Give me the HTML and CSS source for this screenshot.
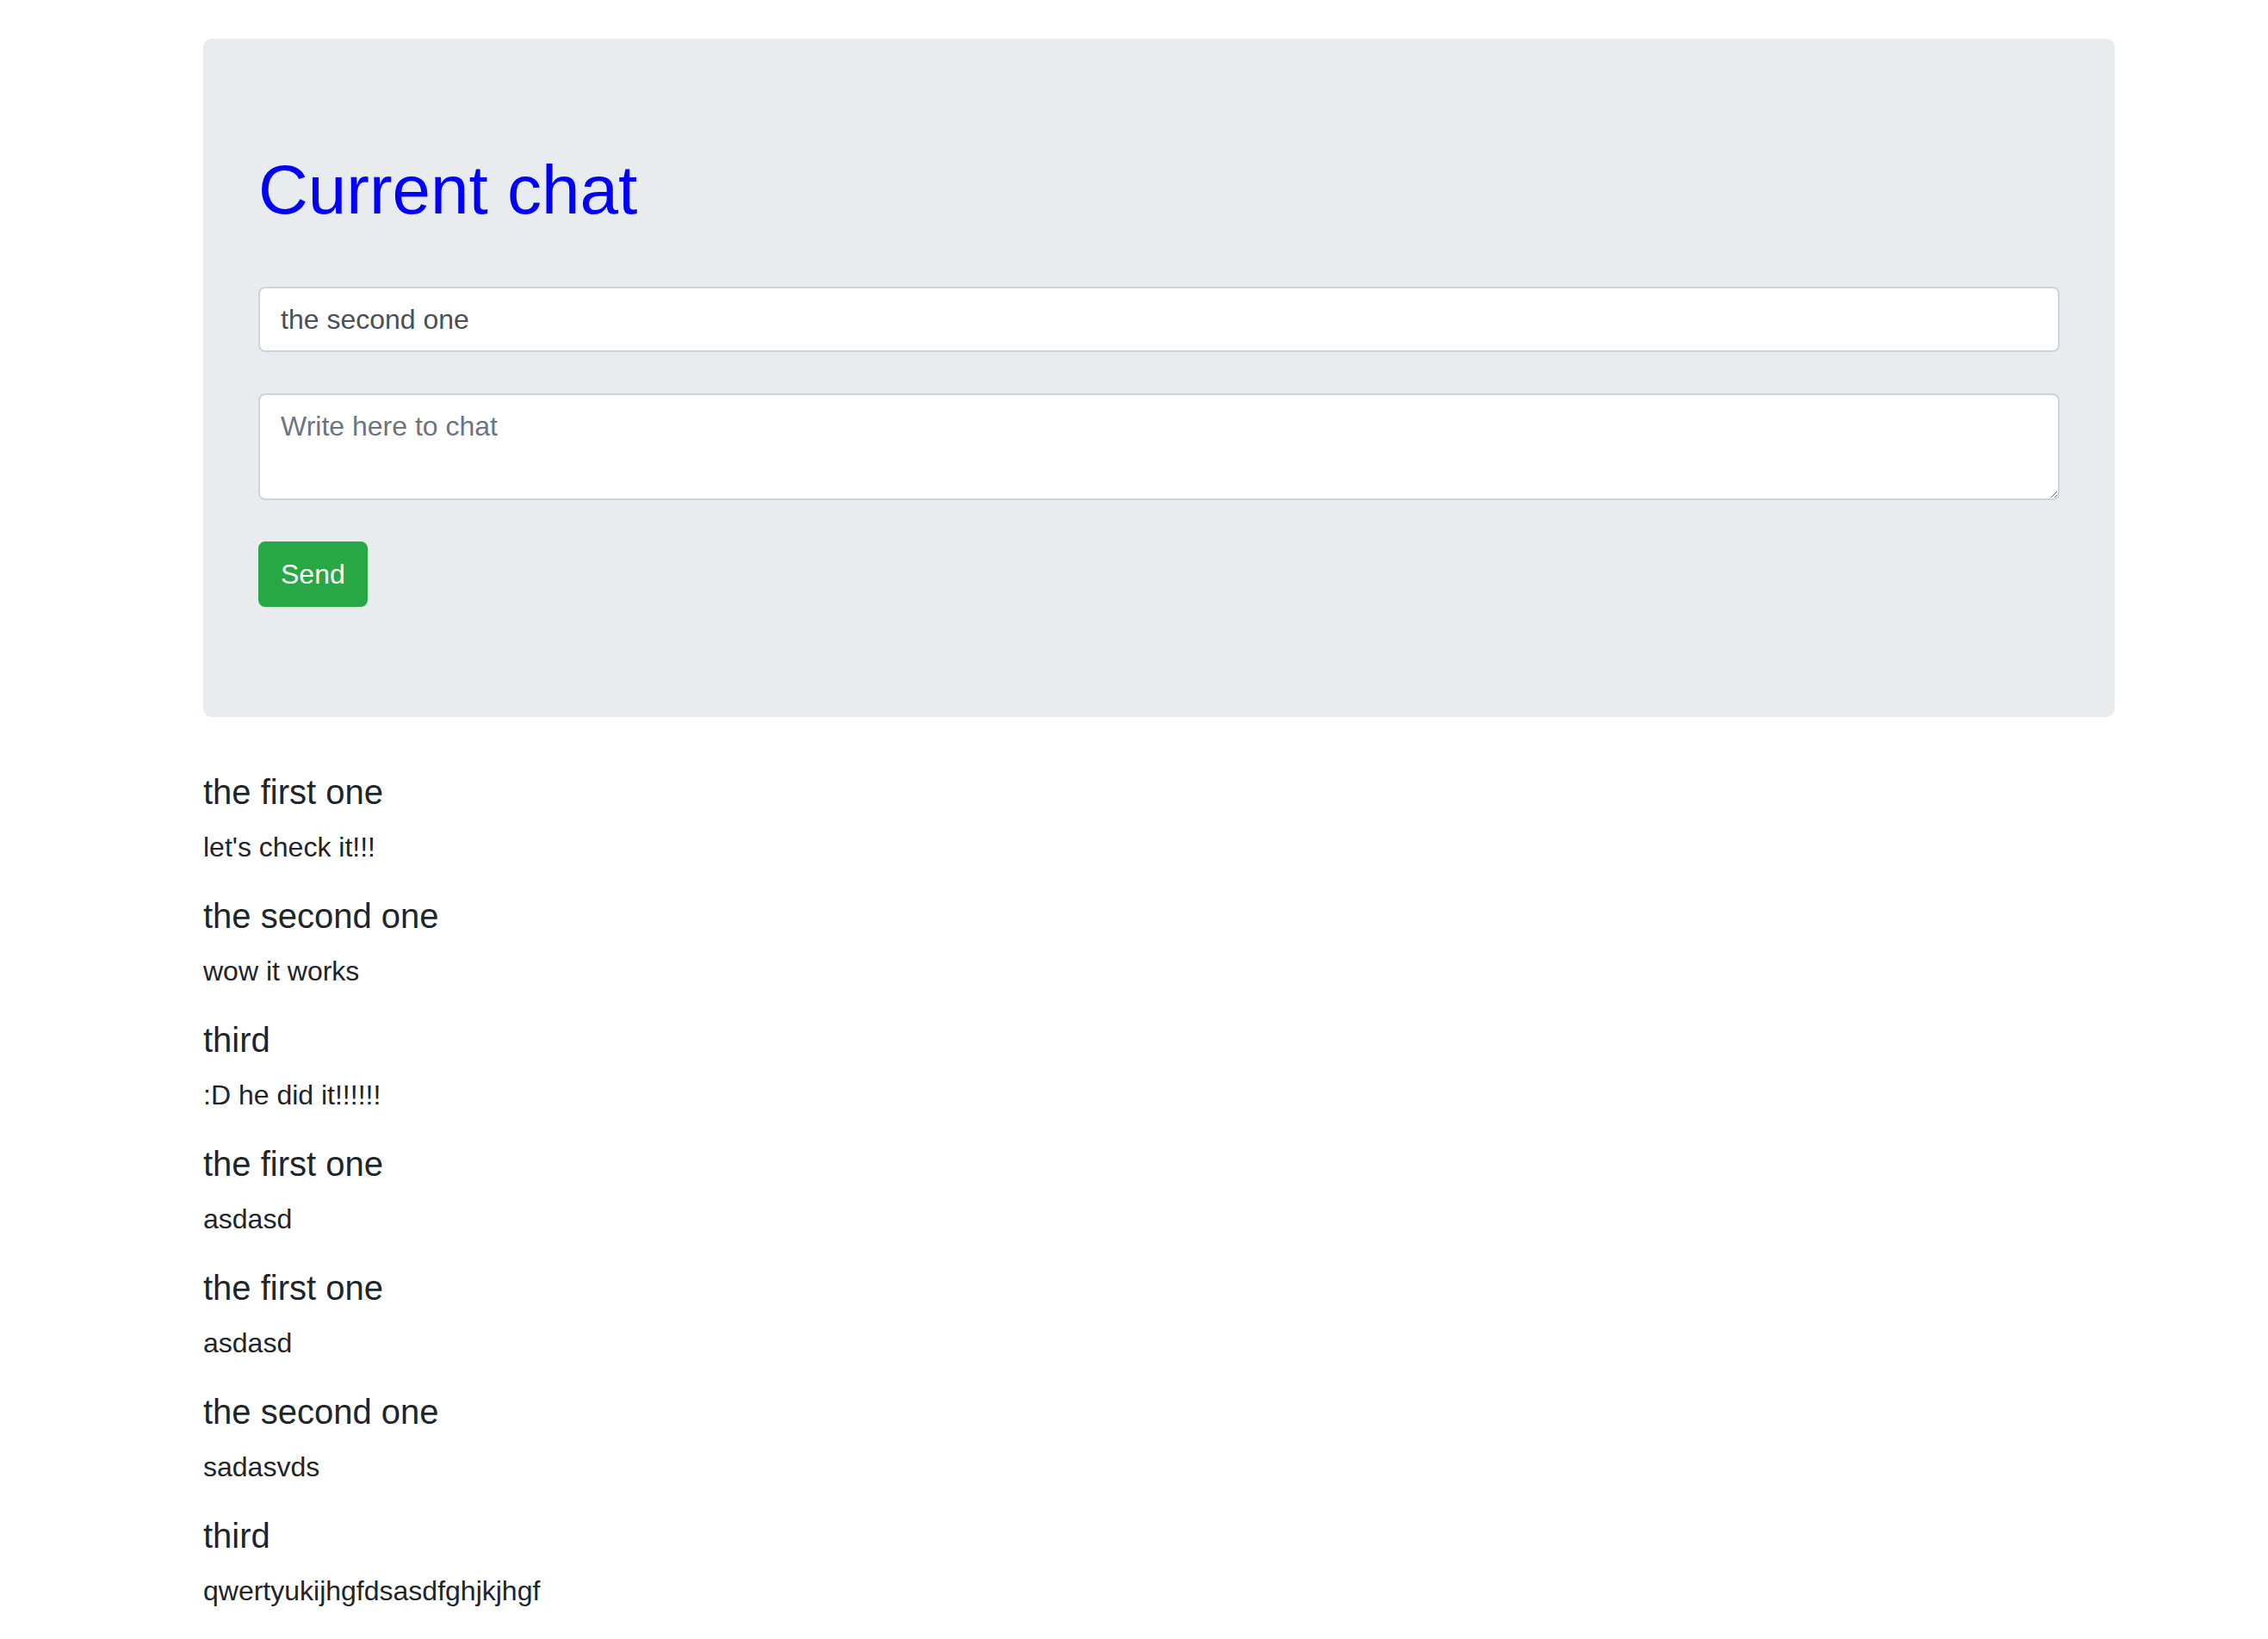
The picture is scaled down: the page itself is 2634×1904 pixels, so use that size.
FILE: index.html
```html
<!DOCTYPE html>
<html lang="en">
<head>
<meta charset="utf-8">
<title>Chat</title>
<link rel="stylesheet" href="styles.css">
</head>
<body>
<div class="container">
  <div class="jumbotron">
    <h1 class="title">Current chat</h1>
    <form class="chat-form">
      <div class="form-group">
        <input class="form-control" type="text" value="the second one">
      </div>
      <div class="form-group">
        <textarea class="form-control textarea" rows="2" placeholder="Write here to chat"></textarea>
      </div>
      <button class="btn-send" type="button">Send</button>
    </form>
  </div>
  <div class="messages">
    <div class="message"><h5 class="author">the first one</h5><p class="text">let's check it!!!</p></div>
    <div class="message"><h5 class="author">the second one</h5><p class="text">wow it works</p></div>
    <div class="message"><h5 class="author">third</h5><p class="text">:D he did it!!!!!!</p></div>
    <div class="message"><h5 class="author">the first one</h5><p class="text">asdasd</p></div>
    <div class="message"><h5 class="author">the first one</h5><p class="text">asdasd</p></div>
    <div class="message"><h5 class="author">the second one</h5><p class="text">sadasvds</p></div>
    <div class="message"><h5 class="author">third</h5><p class="text">qwertyukijhgfdsasdfghjkjhgf</p></div>
  </div>
</div>
</body>
</html>
```
FILE: styles.css
```css
* { box-sizing: border-box; }
html, body { margin: 0; padding: 0; }
body {
  font-family: "Liberation Sans", Arial, sans-serif;
  font-size: 32px;
  line-height: 48px;
  color: #212529;
  background: #fff;
}
.container {
  width: 2220px;
  margin-left: 236px;
  padding-top: 45px;
}
.jumbotron {
  background: #e9ecef;
  border-radius: 10px;
  padding: 128px 64px;
  margin-bottom: 63px;
}
.title {
  margin: 0 0 64px 0;
  font-size: 80px;
  line-height: 96px;
  font-weight: 400;
  color: #0000ff;
}
.chat-form { margin: 0; }
.form-group { margin-bottom: 48px; }
.form-control {
  display: block;
  width: 100%;
  height: 76px;
  padding: 12px 24px;
  font-family: "Liberation Sans", Arial, sans-serif;
  font-size: 32px;
  line-height: 48px;
  color: #495057;
  background: #fff;
  border: 2px solid #ced4da;
  border-radius: 8px;
  outline: none;
  margin: 0;
}
.textarea {
  height: 124px;
  resize: vertical;
}
.textarea::placeholder { color: #6c757d; opacity: 1; }
.btn-send {
  display: inline-block;
  height: 76px;
  padding: 12px 24px;
  font-family: "Liberation Sans", Arial, sans-serif;
  font-size: 32px;
  line-height: 48px;
  color: #fff;
  background: #28a745;
  border: 2px solid #28a745;
  border-radius: 8px;
  margin: 0;
}
.message { margin: 0; }
.author {
  margin: 0 0 16px 0;
  font-size: 40px;
  line-height: 48px;
  font-weight: 400;
}
.text {
  margin: 0 0 32px 0;
}
```
